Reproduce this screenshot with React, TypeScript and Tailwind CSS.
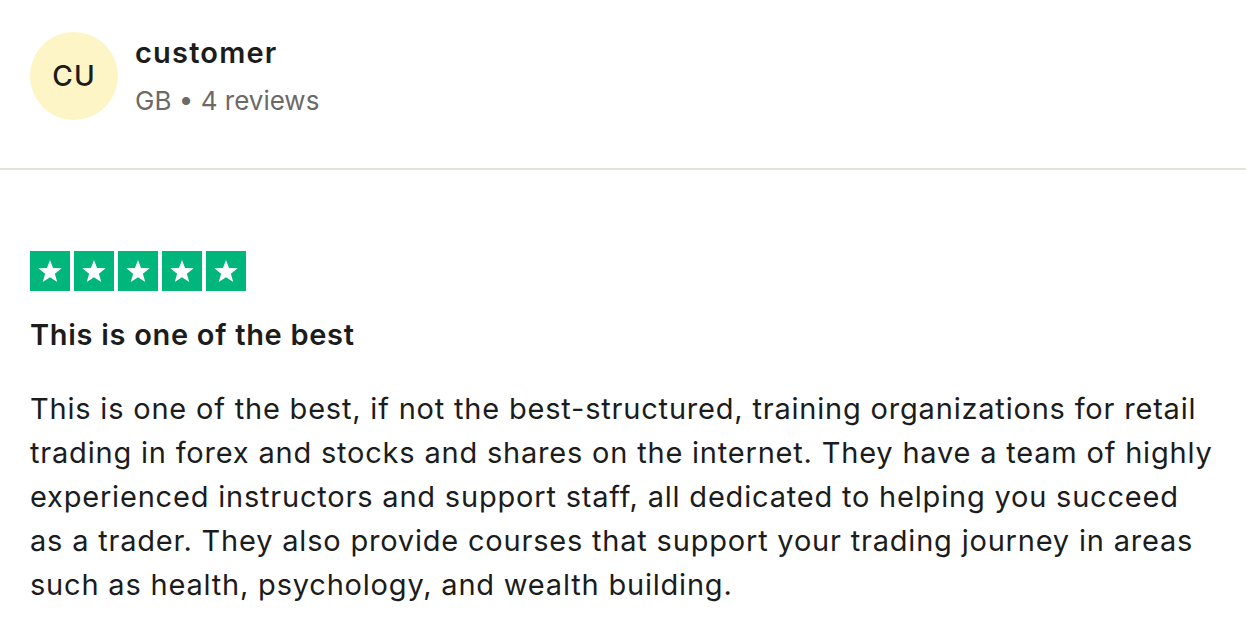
import * as React from 'react';

const Star = () => (
  <div className="w-10 h-10 bg-[#00b67a] flex items-center justify-center">
    <svg viewBox="0 0 24 24" className="w-7 h-7" fill="#fff">
      <path d="M12 2.5l2.6 6.9 7.4.3-5.8 4.6 2 7.2L12 17.4l-6.2 4.1 2-7.2L2 9.7l7.4-.3z" />
    </svg>
  </div>
);

export default function App() {
  return (
    <div className="min-h-screen bg-white text-[#1c1c1c] font-['Inter',sans-serif]">
      <header className="flex items-start gap-[17px] px-[30px] pt-[32px] pb-[48px] border-b-2 border-[#e3e3de]">
        <div className="w-[88px] h-[88px] rounded-full bg-[#fef5c6] flex items-center justify-center text-[28px] font-medium tracking-[1px]">
          CU
        </div>
        <div className="flex flex-col pt-[3px]">
          <span className="text-[29px] leading-[36px] font-semibold tracking-[1.2px]">customer</span>
          <span className="text-[26px] leading-[36px] mt-[12px] text-[#6b6a66]">GB • 4 reviews</span>
        </div>
      </header>

      <section className="pl-[30px] pt-[81px]">
        <div className="flex gap-[4px]">
          <Star />
          <Star />
          <Star />
          <Star />
          <Star />
        </div>
        <h2 className="mt-[22px] text-[29px] leading-[44px] font-semibold tracking-[0.7px]">This is one of the best</h2>
        <p className="mt-[30px] text-[29px] leading-[44px] tracking-[0.8px]">
          This is one of the best, if not the best-structured, training organizations for retail
          <br />
          trading in forex and stocks and shares on the internet. They have a team of highly
          <br />
          experienced instructors and support staff, all dedicated to helping you succeed
          <br />
          as a trader. They also provide courses that support your trading journey in areas
          <br />
          such as health, psychology, and wealth building.
        </p>
      </section>
    </div>
  );
}
